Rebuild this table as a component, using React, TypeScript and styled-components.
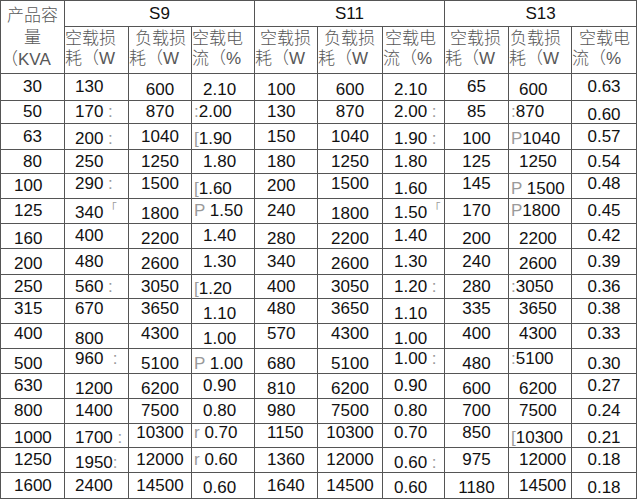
import styled, { createGlobalStyle } from 'styled-components';

const LINE = '#555';
const COL_WIDTHS = [64, 64, 63, 63, 63, 65, 62, 64, 63, 65];
const ROW_HEIGHTS = [26, 47, 27, 23, 26, 24, 25, 25, 25, 26, 24, 25, 25, 25, 25, 25, 24, 25, 26];

const GlobalStyle = createGlobalStyle`
  html, body {
    margin: 0;
    padding: 0;
    background: #fff;
  }
  body {
    font-family: 'Liberation Sans', Arial, 'Noto Sans CJK SC', sans-serif;
  }
`;

const Sheet = styled.div`
  display: grid;
  grid-template-columns: ${COL_WIDTHS.map((w) => `${w}px`).join(' ')};
  grid-template-rows: ${ROW_HEIGHTS.map((h) => `${h}px`).join(' ')};
  width: max-content;
  border-top: 1px solid ${LINE};
  border-left: 1px solid ${LINE};
  background: #fff;
`;

const Cell = styled.div`
  box-sizing: border-box;
  border-right: 1px solid ${LINE};
  border-bottom: 1px solid ${LINE};
  overflow: hidden;
`;

const Corner = styled(Cell)`
  grid-row: 1 / span 2;
  padding-top: 4px;
  font-family: 'Liberation Sans', 'Noto Sans CJK SC', sans-serif;
  font-size: 17px;
  font-weight: 300;
  line-height: 22px;
  color: #585858;
`;

const CornerLine = styled.div<{ $left?: boolean }>`
  text-align: ${(p) => (p.$left ? 'left' : 'center')};
  white-space: nowrap;
`;

const Group = styled(Cell)`
  grid-column: span 3;
  display: flex;
  align-items: center;
  justify-content: center;
  font-size: 17px;
  color: #111;
`;

const SubHead = styled(Cell)`
  display: flex;
  flex-direction: column;
  justify-content: center;
  padding-bottom: 3px;
  font-family: 'Liberation Sans', 'Noto Sans CJK SC', sans-serif;
  font-size: 17px;
  font-weight: 300;
  line-height: 20px;
  color: #585858;
  white-space: nowrap;
`;

const SubLine = styled.div<{ $lead: number }>`
  padding-left: ${(p) => p.$lead}px;
`;

const DataCell = styled(Cell)<{ $center: boolean; $pad: number; $shift: number }>`
  display: flex;
  align-items: center;
  justify-content: ${(p) => (p.$center ? 'center' : 'flex-start')};
  padding-left: ${(p) => (p.$center ? 0 : p.$pad)}px;
  padding-top: ${(p) => Math.max(0, p.$shift * 2)}px;
  padding-bottom: ${(p) => Math.max(0, -p.$shift * 2)}px;
  font-size: 17px;
  color: #111;
  white-space: pre;
`;

const Noise = styled.span<{ $corner?: boolean }>`
  color: #9a9a9a;
  font-family: ${(p) => (p.$corner ? "'Noto Sans CJK SC', sans-serif" : 'inherit')};
  font-size: ${(p) => (p.$corner ? '11px' : 'inherit')};
  vertical-align: ${(p) => (p.$corner ? '6px' : 'baseline')};
`;

type ColSpec = { center: boolean; pad: number };

const COLS: ColSpec[] = [
  { center: false, pad: 13 },
  { center: false, pad: 10 },
  { center: true, pad: 0 },
  { center: false, pad: 11 },
  { center: false, pad: 12 },
  { center: true, pad: 0 },
  { center: false, pad: 11 },
  { center: true, pad: 0 },
  { center: false, pad: 10 },
  { center: true, pad: 0 },
];

const GROUPS = ['S9', 'S11', 'S13'];

const SUBS: [string, string, number][] = [
  ['空载损', '耗（W', 0],
  ['负载损', '耗（W', 6],
  ['空载电', '流（%', 0],
  ['空载损', '耗（W', 5],
  ['负载损', '耗（W', 6],
  ['空载电', '流（%', 2],
  ['空载损', '耗（W', 5],
  ['负载损', '耗（W', 1],
  ['空载电', '流（%', 7],
];

// ^ = sits a little high, _ = sits a little low, {..} = faint scan noise
const ROWS: string[][] = [
  ['30', '130', '_600', '_2.10', '_100', '_600', '_2.10', '65', '_600', '0.63'],
  ['50', '170{ :}', '870', '{:}2.00', '130', '870', '2.00{ :}', '85', '{:}870', '_0.60'],
  ['63', '_200{ :}', '1040', '_{[}1.90', '150', '1040', '_1.90{ :}', '_100', '_{P}1040', '0.57'],
  ['80', '250', '1250', '1.80', '180', '1250', '1.80', '125', '1250', '0.54'],
  ['100', '^290{ :}', '^1500', '_{[}1.60', '200', '^1500', '_1.60', '^145', '_{P }1500', '^0.48'],
  ['125', '340{ 「}', '_1800', '{P }1.50', '240', '_1800', '1.50{ 「}', '170', '{P}1800', '0.45'],
  ['_160', '400', '_2200', '1.40', '_280', '_2200', '1.40', '_200', '_2200', '0.42'],
  ['_200', '480', '_2600', '1.30', '340', '_2600', '1.30', '240', '_2600', '0.39'],
  ['250', '560{ :}', '3050', '_{[}1.20', '400', '3050', '1.20{ :}', '280', '{:}3050', '0.36'],
  ['^315', '^670', '^3650', '_1.10', '^480', '^3650', '_1.10', '^335', '^3650', '^0.38'],
  ['^400', '_800', '^4300', '_1.00', '^570', '^4300', '_1.00', '^400', '^4300', '^0.33'],
  ['_500', '^960{  :}', '_5100', '_{P }1.00', '_680', '_5100', '^1.00{ :}', '_480', '^{:}5100', '_0.30'],
  ['630', '_1200', '_6200', '0.90', '_810', '_6200', '0.90', '_600', '_6200', '0.27'],
  ['800', '1400', '7500', '0.80', '980', '7500', '0.80', '700', '7500', '0.24'],
  ['_1000', '_1700{ :}', '^10300', '^{r }0.70', '^1150', '^10300', '^0.70', '^850', '_{[}10300', '_0.21'],
  ['1250', '_1950{:}', '12000', '{r }0.60', '1360', '12000', '_0.60{ :}', '975', '12000', '0.18'],
  ['1600', '2400', '14500', '_0.60', '1640', '14500', '_0.60', '_1180', '14500', '_0.18'],
];

const parseCell = (raw: string) => {
  let shift = 0;
  let text = raw;
  if (text[0] === '^') {
    shift = -2.5;
    text = text.slice(1);
  } else if (text[0] === '_') {
    shift = 2.5;
    text = text.slice(1);
  }
  const parts = text
    .split(/(\{[^}]*\})/)
    .filter(Boolean)
    .map((p) => (p.startsWith('{') ? { noise: true, text: p.slice(1, -1) } : { noise: false, text: p }));
  return { shift, parts, prefixed: text.startsWith('{') };
};

const App = () => {
  return (
    <>
      <GlobalStyle />
      <Sheet>
        <Corner>
          <CornerLine>产品容</CornerLine>
          <CornerLine>量</CornerLine>
          <CornerLine $left>（KVA</CornerLine>
        </Corner>
        {GROUPS.map((g) => (
          <Group key={g}>{g}</Group>
        ))}
        {SUBS.map(([a, b, lead], i) => (
          <SubHead key={i}>
            <SubLine $lead={lead}>{a}</SubLine>
            <SubLine $lead={0}>{b}</SubLine>
          </SubHead>
        ))}
        {ROWS.map((row, r) =>
          row.map((raw, c) => {
            const { shift, parts, prefixed } = parseCell(raw);
            const spec = COLS[c];
            const center = spec.center || (c === 0 && r < 4);
            return (
              <DataCell key={`${r}-${c}`} $center={center} $pad={prefixed ? 2 : spec.pad} $shift={shift}>
                <span>
                  {parts.map((p, k) =>
                    p.noise ? (
                      <Noise key={k} $corner={p.text.includes('「')}>
                        {p.text}
                      </Noise>
                    ) : (
                      <span key={k}>{p.text}</span>
                    ),
                  )}
                </span>
              </DataCell>
            );
          }),
        )}
      </Sheet>
    </>
  );
};

export default App;
